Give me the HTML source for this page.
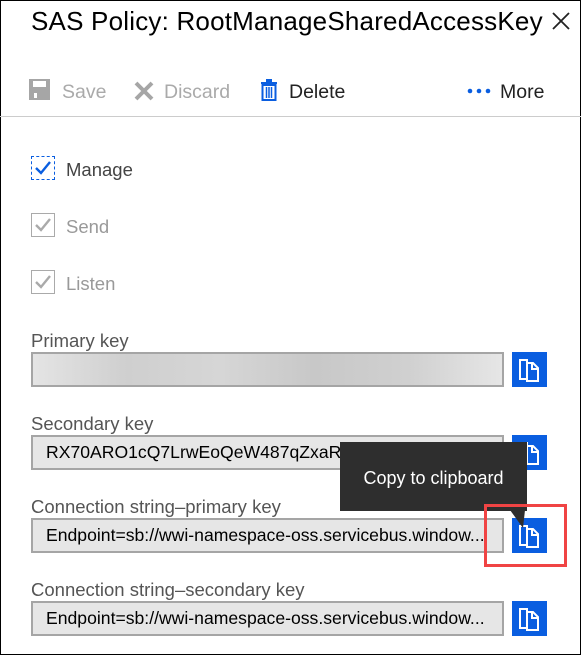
<!DOCTYPE html>
<html><head><style>
body{margin:0;width:581px;height:655px;overflow:hidden;background:#fff;font-family:"Liberation Sans",sans-serif;}
.frame{position:absolute;left:0;top:0;width:579px;height:653px;border:1px solid #000;background:#fff;}
.a{position:absolute;white-space:nowrap;}
.title{left:31px;top:6px;font-size:26px;color:#000;letter-spacing:0.2px;}
.tb{top:81px;font-size:19.5px;}
.lbl{font-size:18.5px;color:#555;left:31px;}
.cb{position:absolute;left:31px;width:22px;height:22px;border:1px solid #aaa;background:#fff;}
.inp{position:absolute;left:31px;background:#e6e6e6;font-size:17.6px;color:#000;line-height:31px;padding-left:13px;box-sizing:border-box;width:473px;height:35px;border:2px solid #a5a5a5;}
.btn{position:absolute;left:512px;width:35px;height:35px;background:#0a5ee0;}
</style></head><body>
<div class="frame"></div>
<div class="a title">SAS Policy: RootManageSharedAccessKey</div>
<svg class="a" style="left:551px;top:11px" width="20" height="20"><path d="M2 2L18 18M18 2L2 18" stroke="#222" stroke-width="1.8"/></svg>
<svg class="a" style="left:28px;top:78px" width="24" height="24"><path d="M1 1H22V22H1Z" fill="#a6a6a6"/><rect x="5" y="3" width="13" height="6" fill="#fff"/><rect x="6" y="15" width="3" height="5" fill="#fff"/></svg>
<div class="a tb" style="left:62px;color:#aaa">Save</div>
<svg class="a" style="left:133px;top:80px" width="22" height="22"><path d="M3 3L19 19M19 3L3 19" stroke="#a6a6a6" stroke-width="4"/></svg>
<div class="a tb" style="left:164px;color:#aaa">Discard</div>
<svg class="a" style="left:260px;top:79px" width="18" height="22"><rect x="1" y="3" width="16" height="2" fill="#0a5ee0"/><rect x="6" y="0" width="6" height="3" fill="#0a5ee0"/><rect x="2.5" y="6" width="13" height="15" fill="none" stroke="#0a5ee0" stroke-width="2"/><path d="M6.5 8V19M9 8V19M11.5 8V19" stroke="#0a5ee0" stroke-width="1.5"/></svg>
<div class="a tb" style="left:289px;color:#222">Delete</div>
<svg class="a" style="left:467px;top:87px" width="28" height="8"><circle cx="3" cy="4" r="2.3" fill="#0a5ee0"/><circle cx="12" cy="4" r="2.3" fill="#0a5ee0"/><circle cx="21" cy="4" r="2.3" fill="#0a5ee0"/></svg>
<div class="a tb" style="left:500px;color:#222">More</div>
<div class="a" style="left:0;top:116px;width:581px;height:1px;background:#ccc"></div>

<div class="cb" style="top:156px;border:1px dashed #0a5ee0;"></div>
<svg class="a" style="left:33px;top:158px" width="20" height="20"><path d="M3 10L8 15L17 4" stroke="#0a5ee0" stroke-width="2.4" fill="none"/></svg>
<div class="a lbl" style="left:66px;top:159px;color:#444">Manage</div>
<div class="cb" style="top:213px"></div>
<svg class="a" style="left:33px;top:215px" width="20" height="20"><path d="M3 10L8 15L17 4" stroke="#aaa" stroke-width="2.4" fill="none"/></svg>
<div class="a lbl" style="left:66px;top:216px;color:#999">Send</div>
<div class="cb" style="top:270px"></div>
<svg class="a" style="left:33px;top:272px" width="20" height="20"><path d="M3 10L8 15L17 4" stroke="#aaa" stroke-width="2.4" fill="none"/></svg>
<div class="a lbl" style="left:66px;top:273px;color:#999">Listen</div>

<div class="a lbl" style="top:330px">Primary key</div>
<div class="inp" style="top:352px;background:linear-gradient(90deg,#e4e4e4,#cfcfcf 20%,#d6d6d6 40%,#c8c8c8 60%,#d0d0d0 80%,#e6e6e6)"></div>
<div class="a lbl" style="top:413px">Secondary key</div>
<div class="inp" style="top:435px">RX70ARO1cQ7LrwEoQeW487qZxaR/K</div>
<div class="a lbl" style="top:496px">Connection string–primary key</div>
<div class="inp" style="top:518px">Endpoint=sb://wwi-namespace-oss.servicebus.window...</div>
<div class="a lbl" style="top:579px">Connection string–secondary key</div>
<div class="inp" style="top:601px">Endpoint=sb://wwi-namespace-oss.servicebus.window...</div>

<div class="btn" style="top:352px"></div>
<div class="btn" style="top:435px"></div>
<div class="btn" style="top:518px"></div>
<div class="btn" style="top:601px"></div>
<svg class="a" style="left:512px;top:352px" width="35" height="35"><path d="M8 8H15V27H8Z M14 11H21L26 16V29H14" fill="none" stroke="#fff" stroke-width="2"/><path d="M20 11V17H26" fill="none" stroke="#fff" stroke-width="2"/></svg>
<svg class="a" style="left:512px;top:435px" width="35" height="35"><path d="M8 8H15V27H8Z M14 11H21L26 16V29H14" fill="none" stroke="#fff" stroke-width="2"/><path d="M20 11V17H26" fill="none" stroke="#fff" stroke-width="2"/></svg>
<svg class="a" style="left:512px;top:518px" width="35" height="35"><path d="M8 8H15V27H8Z M14 11H21L26 16V29H14" fill="none" stroke="#fff" stroke-width="2"/><path d="M20 11V17H26" fill="none" stroke="#fff" stroke-width="2"/></svg>
<svg class="a" style="left:512px;top:601px" width="35" height="35"><path d="M8 8H15V27H8Z M14 11H21L26 16V29H14" fill="none" stroke="#fff" stroke-width="2"/><path d="M20 11V17H26" fill="none" stroke="#fff" stroke-width="2"/></svg>

<div class="a" style="left:340px;top:442px;width:187px;height:69px;background:#2e2e2e;color:#fff;font-size:18px;line-height:72px;text-align:center;">Copy to clipboard</div>
<svg class="a" style="left:510px;top:510px" width="16" height="20"><path d="M0 0H15L13 18Z" fill="#2e2e2e"/></svg>
<div class="a" style="left:484px;top:504px;width:77px;height:57px;border:3px solid #f04444;"></div>
</body></html>
